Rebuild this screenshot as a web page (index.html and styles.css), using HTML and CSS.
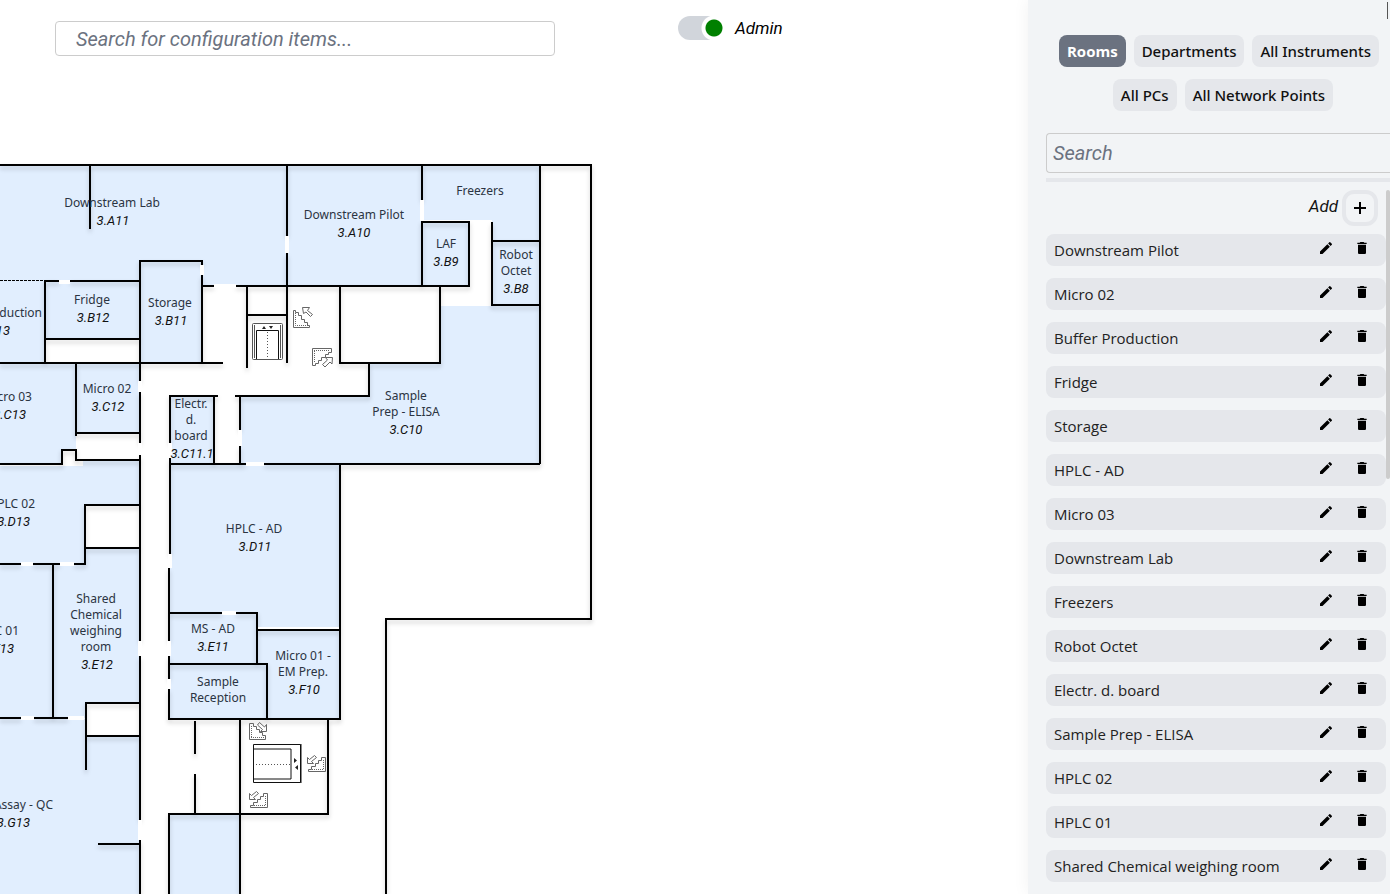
FILE: index.html
```html
<!DOCTYPE html>
<html lang="en">
<head>
<meta charset="utf-8">
<title>Floor plan</title>
<link rel="stylesheet" href="styles.css">
</head>
<body>
<main class="stage">
  <header class="topbar">
    <input class="config-search" type="text" aria-label="Search for configuration items" placeholder="Search for configuration items...">
    <label class="admin"><input class="switch" type="checkbox" checked><span>Admin</span></label>
  </header>
  <svg class="plan" role="img" aria-label="Third floor plan">
    <defs>
      <g id="stairs">
        <path d="M.5 1.500V18.500H16.500V16.500H14.500V13.500H11.500V10.500H8.500V6.500H5.500V3.500H2.500V1.500Z"/><path class="dots" d="M2.500 4V16.500H15"/>
      </g>
      <g id="arrow"><path d="M.5 .5H7.500L5.500 3.500L10.500 7.500L8.500 9.500L4 5L1.500 6.500Z"/></g>
    </defs>
    <g transform="translate(0 -80)">
      <!-- Rooms -->
      <path class="room" d="M0 165H287V286H202V261H140V281H0ZM287 165H422V286H287ZM422 165H540V241H492V220H422ZM422 222H469V286H422ZM492 241H540V305H492ZM440 306H540V464H240V396H369V363H440ZM0 281H45V363H0ZM45 281H140V339H45ZM140 261H202V363H140ZM0 363H76V450H62V464H0ZM76 363H140V433H76ZM0 466H83V460H140V505H85V564H0ZM0 564H53V718H0ZM85 548H140V703H85V718H53V564H85ZM0 719H86V736H140V894H0ZM170 396H214V464H170ZM170 464H340V719H169V568H170ZM169 814H240V894H169Z"/>
      <!-- Walls -->
      <path class="wall" d="M0 165H592M90 165V229M287 165V236M287 253V363M45 280V363M45 281H59M70 281H140M45 339H140M0 363H223M140 363V261H202V265M202 275V363M202 286H214M236 286H470M247 286V368M247 315H287M340 286V363H440V286M369 363V396H235M422 165V200M422 286V222H469V286M492 222V305H540M492 241H540M540 165V464M591 165V619H386V894
      M76 363V436M76 433H140M140 363V381M140 392V443M140 455V641M140 656V820M140 840V894M0 464H62V450H76V460H140M140 505H85V564H74M85 548H140M0 564H21M33 564H60M53 564V719M0 718H21M34 718H68M85 703H140M86 703V770M86 736H140M98 844H140
      M170 443V396H218M214 396V464M170 458V554M170 464H246M264 464H540M240 396V430M240 446V464M169 568V641M169 656V679M169 689V719H340V464M169 613H222M236 613H257V664M257 630H340M169 664H267V719M195 721V754M195 774V814M240 719V894M328 719V814H169V894"/>
      <path class="glass" d="M0 280.500H45"/>
      <!-- Door openings -->
      <path class="door" d="M287 236V253M202 265V275M59 282H70M422 200V221M214 286H236M140 381V392M140 443V455M140 641V656M140 820V840M170 443V458M170 554V568M240 430V446M246 464H264M169 641V656M169 679V689M222 613H236M21 564H33M60 564H74M21 718H34M68 718H84"/>
      <path class="door-edge" d="M258 628H339"/>
      <!-- Lifts -->
      <g class="lift">
        <rect x="252.500" y="323.500" width="30" height="36" rx="1"/>
        <path d="M254.500 325V358M280.500 325V358"/>
        <path class="ink" d="M256.500 359V330.500H278.500V359"/>
        <path class="dots" d="M267.500 332V358"/>
        <path class="fill" d="M262 329l2-3 2 3zM269 326h4l-2 3z"/>
        <path class="ink" d="M253.500 744.500H300.500V782.500H253.500Z"/>
        <path class="ink" d="M301 744V783M254 749H291V779H254"/>
        <path class="dots" d="M256 764.500H290"/>
        <path class="fill" d="M294 758v5l3-2.500zM298 765v5l-3-2.500z"/>
      </g>
      <!-- Stairs -->
      <g class="stair">
        <use href="#stairs" x="293" y="309"/><use href="#arrow" x="302" y="307"/>
        <path d="M312.500 348.500H331.500V352.500H328.500V354.500H325.500V357.500H321.500V360.500H318.500V363.500H315.500V365.500H312.500Z"/><path class="dots" d="M314 350.500H330M314.500 351V363"/><path d="M332.500 357.500H325.500L327.500 360L322.500 364.500L325 367L330 362L332 364Z"/>
        <path d="M249.500 723.500V739.500H265.500V735.500H262.500V732.500H259.500V729.500H256.500V726.500H253.500V723.500Z"/><path class="dots" d="M251 737.500H265M251.500 726V737"/><path d="M266.500 731.500V724.500L264.500 727L259.500 722.500L257.500 725L262.500 729.500L260.500 731.500Z"/>
        <path d="M308.500 771.500H325.500V757.500H321.500V760.500H318.500V763.500H315.500V766.500H311.500V769.500H308.500Z"/><path class="dots" d="M310 769.500H324M323.500 760V770"/><path d="M307.500 763.500V757.500L309.500 759.500L314.500 755.500L316.500 757.500L311.500 761.500L313.500 763.500Z"/>
        <path d="M250.500 807.500H267.500V793.500H263.500V796.500H260.500V799.500H257.500V802.500H253.500V805.500H250.500Z"/><path class="dots" d="M252 805.500H266M265.500 796V806"/><path d="M249.500 799.500V793.500L251.500 795.500L256.500 791.500L258.500 793.500L253.500 797.500L255.500 799.500Z"/>
      </g>
      <!-- Labels -->
      <g class="labels">
        <text x="112" y="207">Downstream Lab</text><text class="code" x="113" y="225">3.A11</text>
        <text x="354" y="219">Downstream Pilot</text><text class="code" x="354" y="237">3.A10</text>
        <text x="480" y="195">Freezers</text>
        <text x="446" y="248">LAF</text><text class="code" x="446" y="266">3.B9</text>
        <text x="516" y="259">Robot</text><text x="516" y="275">Octet</text><text class="code" x="516" y="293">3.B8</text>
        <text x="92" y="304">Fridge</text><text class="code" x="93" y="322">3.B12</text>
        <text x="170" y="307">Storage</text><text class="code" x="171" y="325">3.B11</text>
        <text class="end" x="42" y="317">Buffer Production</text><text class="code end" x="10" y="335">3.B13</text>
        <text x="107" y="393">Micro 02</text><text class="code" x="108" y="411">3.C12</text>
        <text class="end" x="32" y="401">Micro 03</text><text class="code end" x="26" y="419">3.C13</text>
        <text x="191" y="408">Electr.</text><text x="191" y="424">d.</text><text x="191" y="440">board</text><text class="code" x="192" y="458">3.C11.1</text>
        <text x="406" y="400">Sample</text><text x="406" y="416">Prep - ELISA</text><text class="code" x="406" y="434">3.C10</text>
        <text class="end" x="35" y="508">HPLC 02</text><text class="code end" x="30" y="526">3.D13</text>
        <text x="254" y="533">HPLC - AD</text><text class="code" x="255" y="551">3.D11</text>
        <text x="96" y="603">Shared</text><text x="96" y="619">Chemical</text><text x="96" y="635">weighing</text><text x="96" y="651">room</text><text class="code" x="97" y="669">3.E12</text>
        <text class="end" x="19" y="635">HPLC 01</text><text class="code end" x="14" y="653">3.E13</text>
        <text x="213" y="633">MS - AD</text><text class="code" x="213" y="651">3.E11</text>
        <text x="303" y="660">Micro 01 -</text><text x="303" y="676">EM Prep.</text><text class="code" x="304" y="694">3.F10</text>
        <text x="218" y="686">Sample</text><text x="218" y="702">Reception</text>
        <text class="end" x="53" y="809">Assay - QC</text><text class="code end" x="30" y="827">3.G13</text>
      </g>
    </g>
  </svg>
</main>
<aside class="panel">
  <svg class="hidden" aria-hidden="true">
    <symbol id="pen" viewBox="0 0 24 24"><path d="M3 17.250V21h3.750L17.810 9.940l-3.750-3.750zM20.710 7.040a1 1 0 0 0 0-1.410l-2.340-2.340a1 1 0 0 0-1.410 0l-1.830 1.830 3.750 3.750z"/></symbol>
    <symbol id="bin" viewBox="0 0 24 24"><path d="M6 19c0 1.100.9 2 2 2h8c1.100 0 2-.9 2-2V7H6zM19 4h-3.500l-1-1h-5l-1 1H5v2h14z"/></symbol>
  </svg>
  <div class="handle"></div>
  <nav class="tabs">
    <button class="tab active">Rooms</button><button class="tab">Departments</button><button class="tab">All Instruments</button><button class="tab">All PCs</button><button class="tab">All Network Points</button>
  </nav>
  <input class="panel-search" type="text" aria-label="Search rooms" placeholder="Search">
  <div class="scroller">
    <div class="content">
      <div class="add"><label for="add">Add</label><button id="add" class="plus" aria-label="Add room"><svg viewBox="0 0 12 12"><path d="M6 0V12M0 6H12"/></svg></button></div>
      <ul class="rows">
        <li><span>Downstream Pilot</span><button aria-label="Edit"><svg><use href="#pen"/></svg></button><button aria-label="Delete"><svg><use href="#bin"/></svg></button></li>
        <li><span>Micro 02</span><button aria-label="Edit"><svg><use href="#pen"/></svg></button><button aria-label="Delete"><svg><use href="#bin"/></svg></button></li>
        <li><span>Buffer Production</span><button aria-label="Edit"><svg><use href="#pen"/></svg></button><button aria-label="Delete"><svg><use href="#bin"/></svg></button></li>
        <li><span>Fridge</span><button aria-label="Edit"><svg><use href="#pen"/></svg></button><button aria-label="Delete"><svg><use href="#bin"/></svg></button></li>
        <li><span>Storage</span><button aria-label="Edit"><svg><use href="#pen"/></svg></button><button aria-label="Delete"><svg><use href="#bin"/></svg></button></li>
        <li><span>HPLC - AD</span><button aria-label="Edit"><svg><use href="#pen"/></svg></button><button aria-label="Delete"><svg><use href="#bin"/></svg></button></li>
        <li><span>Micro 03</span><button aria-label="Edit"><svg><use href="#pen"/></svg></button><button aria-label="Delete"><svg><use href="#bin"/></svg></button></li>
        <li><span>Downstream Lab</span><button aria-label="Edit"><svg><use href="#pen"/></svg></button><button aria-label="Delete"><svg><use href="#bin"/></svg></button></li>
        <li><span>Freezers</span><button aria-label="Edit"><svg><use href="#pen"/></svg></button><button aria-label="Delete"><svg><use href="#bin"/></svg></button></li>
        <li><span>Robot Octet</span><button aria-label="Edit"><svg><use href="#pen"/></svg></button><button aria-label="Delete"><svg><use href="#bin"/></svg></button></li>
        <li><span>Electr. d. board</span><button aria-label="Edit"><svg><use href="#pen"/></svg></button><button aria-label="Delete"><svg><use href="#bin"/></svg></button></li>
        <li><span>Sample Prep - ELISA</span><button aria-label="Edit"><svg><use href="#pen"/></svg></button><button aria-label="Delete"><svg><use href="#bin"/></svg></button></li>
        <li><span>HPLC 02</span><button aria-label="Edit"><svg><use href="#pen"/></svg></button><button aria-label="Delete"><svg><use href="#bin"/></svg></button></li>
        <li><span>HPLC 01</span><button aria-label="Edit"><svg><use href="#pen"/></svg></button><button aria-label="Delete"><svg><use href="#bin"/></svg></button></li>
        <li><span>Shared Chemical weighing room</span><button aria-label="Edit"><svg><use href="#pen"/></svg></button><button aria-label="Delete"><svg><use href="#bin"/></svg></button></li>
      </ul>
    </div>
    <div class="track"><div class="thumb"></div></div>
  </div>
</aside>
</body>
</html>
```
FILE: styles.css
```css
* { box-sizing: border-box; }
body { margin: 0; height: 100vh; display: flex; overflow: hidden; background: #fff; color: #111; font-family: "Open Sans", "Noto Sans", sans-serif; font-size: 16px; }
button { border: 0; padding: 0; background: none; color: inherit; font: inherit; }
.stage { flex: 1; min-width: 0; display: flex; flex-direction: column; }
.topbar { height: 80px; flex: none; display: flex; align-items: flex-start; gap: 123px; padding: 15px 55px 0; }
.config-search { width: 500px; height: 35px; margin-top: 6px; padding: 0 20px; border: 1px solid #ccc; border-radius: 4px; background: #fff; font: italic 20px Roboto, sans-serif; }
::placeholder { color: #6b7280; opacity: 1; }
.admin { display: flex; align-items: center; gap: 12px; height: 26px; font: italic 17px Roboto, sans-serif; color: #000; }
.switch { appearance: none; margin: 0; width: 45px; height: 24px; border-radius: 12px; background: radial-gradient(circle at 36px 12px, #008000 0 8px, #fff 9px 12px, #d1d5db 13px); }
.plan { flex: 1; min-height: 0; width: 100%; display: block; }
.room { fill: #e1eefe; }
.wall { fill: none; stroke: #000; stroke-width: 2; stroke-linecap: butt; filter: drop-shadow(0 3px 2px rgba(0, 0, 0, .2)); }
.glass { stroke: #000; stroke-width: 1; stroke-dasharray: 3 1; }
.door { stroke: #fff; stroke-width: 4; }
.door-edge { stroke: #fff; stroke-width: 2; }
.lift { fill: none; stroke: #555; stroke-width: 1; }
.lift .ink { stroke: #111; }
.lift .dots { stroke: #555; stroke-dasharray: 1 2; }
.lift .fill { fill: #222; stroke: none; }
.stair { fill: none; stroke: #666; stroke-width: 1; }
.dots { stroke-dasharray: 1 1; }
.labels { font-family: "Noto Sans", sans-serif; font-size: 12px; fill: #2b3442; text-anchor: middle; }
.labels .code { font: italic 13px Roboto, sans-serif; fill: #111; }
.labels .end { text-anchor: end; }
.panel { position: relative; width: 362px; flex: none; display: flex; flex-direction: column; padding: 35px 0 0 18px; background: #f2f4f6; box-shadow: 0 0 16px rgba(0, 0, 0, .06); }
.hidden { position: absolute; width: 0; height: 0; }
.handle { position: absolute; top: 2px; right: 2px; width: 1px; height: 17px; background: #555; }
.tabs { display: flex; flex-wrap: wrap; justify-content: center; row-gap: 12px; padding-left: 10px; margin-bottom: 22px; }
.tab { height: 32px; margin-right: 8px; padding: 0 8px; border-radius: 8px; background: #e5e7eb; font-family: "Noto Sans", sans-serif; font-size: 15px; font-weight: 500; }
.tab:last-child { margin-right: 0; }
.tab.active { background: #6b7280; color: #fff; font-family: "Open Sans", sans-serif; font-weight: 700; }
.panel-search { width: 100%; height: 40px; padding: 0 6px; border: 1px solid #ccc; border-right: 0; border-radius: 4px 0 0 4px; background: #f2f4f6; font: italic 20px Roboto, sans-serif; }
.scroller { flex: 1; min-height: 0; display: flex; margin-top: 5px; border-top: 4px solid #e5e7eb; }
.content { flex: 1; min-width: 0; overflow: hidden; }
.add { display: flex; justify-content: flex-end; gap: 4px; margin: 8px 8px 8px 0; height: 36px; font: italic 17px/32px Roboto, sans-serif; }
.plus { width: 36px; height: 36px; border: 4px solid #e5e7eb; border-radius: 12px; display: grid; place-items: center; }
.plus svg { width: 12px; height: 12px; stroke: #000; stroke-width: 2; }
.rows { list-style: none; margin: 0; padding: 0; display: grid; gap: 12px; }
.rows li { height: 32px; display: flex; align-items: center; padding: 0 16px 0 8px; border-radius: 8px; background: #e5e7eb; font-size: 15px; color: #222; }
.rows span { flex: 1; }
.rows button { width: 16px; height: 20px; margin-left: 20px; display: flex; align-items: flex-start; color: #000; }
.rows svg { width: 16px; height: 16px; display: block; }
.track { width: 4px; padding-top: 8px; }
.thumb { height: 41%; background: #ccc; border-radius: 2px; }
```
